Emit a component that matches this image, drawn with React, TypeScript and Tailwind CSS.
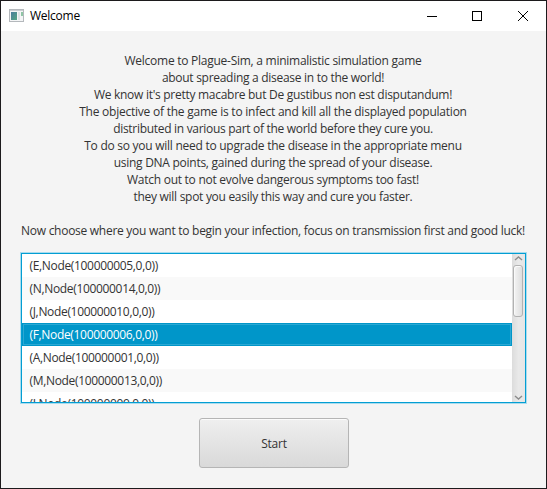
const lines = [
  { text: 'Welcome to Plague-Sim, a minimalistic simulation game', cls: 'tracking-[-0.26px]' },
  { text: 'about spreading a disease in to the world!', cls: 'tracking-[-0.285px]' },
  { text: "We know it's pretty macabre but De gustibus non est disputandum!", cls: 'tracking-[-0.28px]' },
  { text: 'The objective of the game is to infect and kill all the displayed population', cls: 'tracking-[-0.235px]' },
  { text: 'distributed in various part of the world before they cure you.', cls: 'tracking-[-0.3px]' },
  { text: 'To do so you will need to upgrade the disease in the appropriate menu', cls: 'tracking-[-0.26px]' },
  { text: 'using DNA points, gained during the spread of your disease.', cls: 'tracking-[-0.27px]' },
  { text: 'Watch out to not evolve dangerous symptoms too fast!', cls: 'tracking-[-0.27px]' },
  { text: 'they will spot you easily this way and cure you faster.', cls: 'tracking-[-0.29px]' },
  { text: '', cls: '' },
  { text: 'Now choose where you want to begin your infection, focus on transmission first and good luck!', cls: 'tracking-[-0.275px]' },
];

const rows = [
  '(E,Node(100000005,0,0))',
  '(N,Node(100000014,0,0))',
  '(J,Node(100000010,0,0))',
  '(F,Node(100000006,0,0))',
  '(A,Node(100000001,0,0))',
  '(M,Node(100000013,0,0))',
  '(I,Node(100000009,0,0))',
];
const selected = 3;

function TitleBar() {
  return (
    <header className="flex h-[30px] shrink-0 items-center bg-white pl-2 text-black">
      <svg width="16" height="14" viewBox="0 0 16 14" className="shrink-0">
        <defs>
          <linearGradient id="app" x1="0" y1="0" x2="1" y2="1">
            <stop offset="0" stopColor="#4a7d9c" />
            <stop offset="1" stopColor="#55a583" />
          </linearGradient>
        </defs>
        <rect x="0.5" y="0.5" width="14" height="12" fill="#f4f5f6" stroke="#b4b8bc" />
        <rect x="1" y="1" width="13" height="1" fill="#c9cdd1" />
        <rect x="2" y="3" width="6" height="8" fill="url(#app)" />
        <rect x="9" y="3" width="2" height="8" fill="#dfe4e6" />
        <rect x="12" y="3" width="2" height="4" fill="#8fc5a5" />
      </svg>
      <span className="ml-[5px] text-xs tracking-[-0.25px]">Welcome</span>
      <svg width="110" height="12" viewBox="0 0 110 12" className="ml-auto mr-[10px]" fill="none" stroke="#000">
        <path d="M1 6.5h10" />
        <rect x="46.5" y="1.5" width="9" height="9" />
        <path d="M92 1l10 10M102 1l-10 10" />
      </svg>
    </header>
  );
}

function ScrollBar() {
  return (
    <div className="flex w-[13px] shrink-0 flex-col items-center bg-linear-to-r from-[#dcdcdc] via-[#e9e9e9] to-[#e6e6e6]">
      <svg width="9" height="11" viewBox="0 0 9 11" fill="none" stroke="#8c8c8c" strokeWidth="1.4" className="shrink-0">
        <path d="M1 6l3.5-3L8 6" />
      </svg>
      <div className="h-[52px] w-[10px] shrink-0 rounded-[3px] border border-[#b2b2b2] bg-linear-to-r from-[#f4f4f4] to-[#dedede] shadow-[inset_1px_1px_0_#fafafa]" />
      <svg width="9" height="9" viewBox="0 0 9 9" fill="none" stroke="#8c8c8c" strokeWidth="1.4" className="mt-auto shrink-0">
        <path d="M1 3l3.5 3L8 3" />
      </svg>
    </div>
  );
}

export default function App() {
  return (
    <div className="flex h-[489px] w-[547px] flex-col overflow-hidden border border-[#1c1a1c] bg-[#f4f4f4] font-['Open_Sans','Noto_Sans',sans-serif] text-xs text-[#333]">
      <TitleBar />
      <main className="flex flex-col items-center pt-[21px]">
        <div className="flex flex-col items-center pr-px">
          {lines.map((line, i) => (
            <p key={i} className={`h-[17px] leading-[17px] whitespace-nowrap ${line.cls}`}>{line.text}</p>
          ))}
        </div>
        <div className="mt-[14px] mr-px flex h-[150px] w-[505px] overflow-hidden border border-[#039ed3] bg-white shadow-[0_0_0_1px_#a9dcee]">
          <ul className="min-w-0 flex-1 overflow-hidden tracking-[-0.33px]">
            {rows.map((row, i) => (
              <li
                key={row}
                className={`flex h-[23px] items-center pl-2 ${
                  i === selected
                    ? 'bg-[#0096c9] text-white shadow-[inset_0_0_0_1px_#0096c9,inset_0_0_0_2px_#2ba8d3]'
                    : i % 2 ? 'bg-[#f9f9f9]' : 'bg-white'
                }`}
              >
                {row}
              </li>
            ))}
          </ul>
          <ScrollBar />
        </div>
        <button className="mt-[15px] ml-px h-[50px] w-[150px] rounded-[3px] border border-[#b5b5b5] bg-linear-to-b from-[#efefef] to-[#d9d9d9] pt-px tracking-[-0.2px] shadow-[inset_0_1px_0_#fbfbfb]">
          Start
        </button>
      </main>
    </div>
  );
}
